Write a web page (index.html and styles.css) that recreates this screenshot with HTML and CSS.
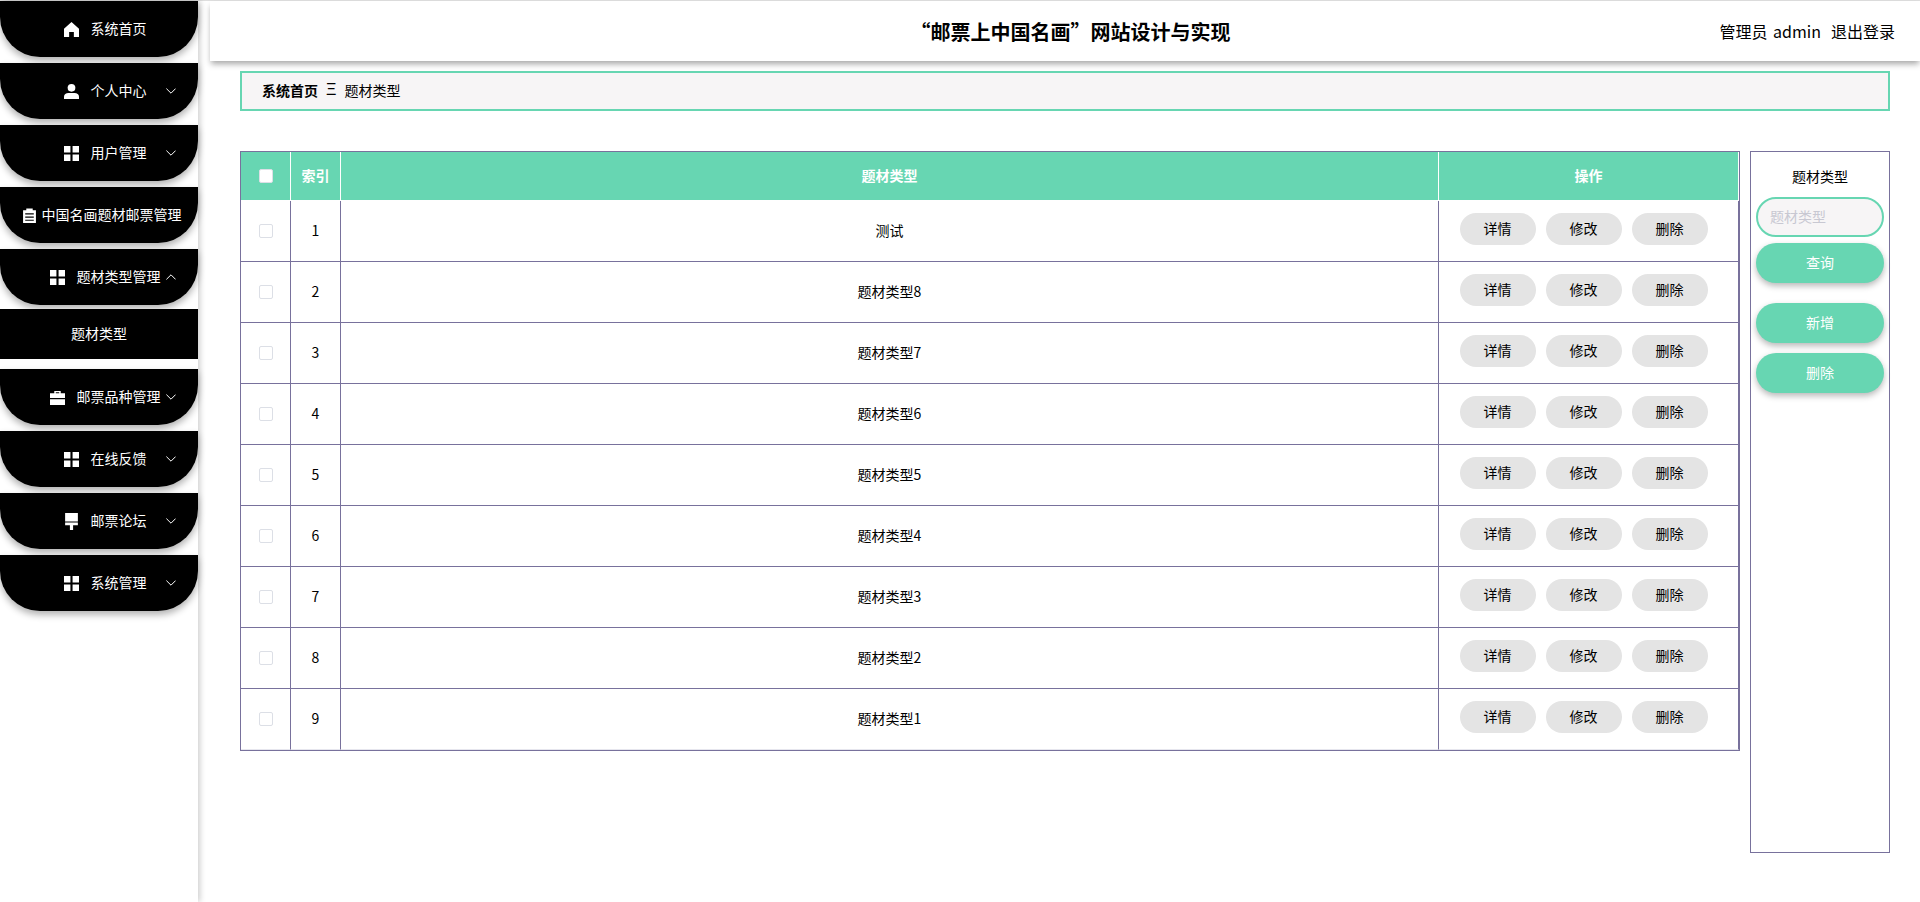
FILE: index.html
```html
<!DOCTYPE html>
<html lang="zh-CN">
<head>
<meta charset="utf-8">
<title>“邮票上中国名画”网站设计与实现</title>
<link rel="stylesheet" href="styles.css">
</head>
<body>
<svg class="sprite" aria-hidden="true">
  <symbol id="i-home" viewBox="0 0 14 14"><path d="M7 0 14 6.2V14H9.2V9.4H4.8V14H0V6.2Z"/></symbol>
  <symbol id="i-user" viewBox="0 0 14 14"><circle cx="7" cy="3.6" r="3.6"/><path d="M0 14V11.6C0 9.6 2 8.4 4 8.4H10C12 8.4 14 9.6 14 11.6V14Z"/></symbol>
  <symbol id="i-grid" viewBox="0 0 14 14"><path d="M0 0H6V6H0ZM8 0H14V6H8ZM0 8H6V14H0ZM8 8H14V14H8Z"/></symbol>
  <symbol id="i-clip" viewBox="0 0 14 14"><path fill-rule="evenodd" d="M1 2H4V0.5H10V2H13V14H1ZM3 5V6H11V5ZM3 8V9H11V8ZM3 11V12H11V11Z"/></symbol>
  <symbol id="i-case" viewBox="0 0 14 14"><path fill-rule="evenodd" d="M4 3V1H10V3H14V7.4H0V3ZM5.4 2.2V3H8.6V2.2ZM0 8.6H14V14H0Z"/></symbol>
  <symbol id="i-brush" viewBox="0 0 14 16"><path d="M1 0H13V8H1ZM1 9H13V11.5H8.5V16H5.5V11.5H1Z"/></symbol>
  <symbol id="i-down" viewBox="0 0 10 6"><path d="M.4.6 5 5.2 9.6.6" fill="none" stroke="#fff" stroke-width="1"/></symbol>
  <symbol id="i-up" viewBox="0 0 10 6"><path d="M.4 5.4 5 .8 9.6 5.4" fill="none" stroke="#fff" stroke-width="1"/></symbol>
</svg>
<div class="app">
  <aside class="sidebar">
    <a class="nav-item"><svg class="nav-icon"><use href="#i-home"/></svg><span>系统首页</span></a>
    <a class="nav-item"><svg class="nav-icon"><use href="#i-user"/></svg><span>个人中心</span><svg class="nav-arrow"><use href="#i-down"/></svg></a>
    <a class="nav-item"><svg class="nav-icon"><use href="#i-grid"/></svg><span>用户管理</span><svg class="nav-arrow"><use href="#i-down"/></svg></a>
    <a class="nav-item nav-item--wide"><svg class="nav-icon"><use href="#i-clip"/></svg><span>中国名画题材邮票管理</span></a>
    <a class="nav-item nav-item--open"><svg class="nav-icon"><use href="#i-grid"/></svg><span>题材类型管理</span><svg class="nav-arrow"><use href="#i-up"/></svg></a>
    <a class="nav-sub">题材类型</a>
    <a class="nav-item"><svg class="nav-icon"><use href="#i-case"/></svg><span>邮票品种管理</span><svg class="nav-arrow"><use href="#i-down"/></svg></a>
    <a class="nav-item"><svg class="nav-icon"><use href="#i-grid"/></svg><span>在线反馈</span><svg class="nav-arrow"><use href="#i-down"/></svg></a>
    <a class="nav-item"><svg class="nav-icon nav-icon--tall"><use href="#i-brush"/></svg><span>邮票论坛</span><svg class="nav-arrow"><use href="#i-down"/></svg></a>
    <a class="nav-item"><svg class="nav-icon"><use href="#i-grid"/></svg><span>系统管理</span><svg class="nav-arrow"><use href="#i-down"/></svg></a>
  </aside>
  <div class="main">
    <header class="topbar">
      <h1 class="title">“邮票上中国名画”网站设计与实现</h1>
      <div class="user"><span>管理员 admin</span><a>退出登录</a></div>
    </header>
    <div class="content">
      <nav class="crumb"><b>系统首页</b><i class="crumb-sep">Ξ</i><span>题材类型</span></nav>
      <div class="work">
        <table class="grid">
          <thead>
            <tr>
              <th class="col-check"><span class="check"></span></th>
              <th class="col-index">索引</th>
              <th>题材类型</th>
              <th class="col-ops">操作</th>
            </tr>
          </thead>
          <tbody>
            <tr><td class="cell-check"><span class="check"></span></td><td>1</td><td>测试</td><td class="ops"><div class="ops-row"><a class="mini">详情</a><a class="mini">修改</a><a class="mini">删除</a></div></td></tr>
            <tr><td class="cell-check"><span class="check"></span></td><td>2</td><td>题材类型8</td><td class="ops"><div class="ops-row"><a class="mini">详情</a><a class="mini">修改</a><a class="mini">删除</a></div></td></tr>
            <tr><td class="cell-check"><span class="check"></span></td><td>3</td><td>题材类型7</td><td class="ops"><div class="ops-row"><a class="mini">详情</a><a class="mini">修改</a><a class="mini">删除</a></div></td></tr>
            <tr><td class="cell-check"><span class="check"></span></td><td>4</td><td>题材类型6</td><td class="ops"><div class="ops-row"><a class="mini">详情</a><a class="mini">修改</a><a class="mini">删除</a></div></td></tr>
            <tr><td class="cell-check"><span class="check"></span></td><td>5</td><td>题材类型5</td><td class="ops"><div class="ops-row"><a class="mini">详情</a><a class="mini">修改</a><a class="mini">删除</a></div></td></tr>
            <tr><td class="cell-check"><span class="check"></span></td><td>6</td><td>题材类型4</td><td class="ops"><div class="ops-row"><a class="mini">详情</a><a class="mini">修改</a><a class="mini">删除</a></div></td></tr>
            <tr><td class="cell-check"><span class="check"></span></td><td>7</td><td>题材类型3</td><td class="ops"><div class="ops-row"><a class="mini">详情</a><a class="mini">修改</a><a class="mini">删除</a></div></td></tr>
            <tr><td class="cell-check"><span class="check"></span></td><td>8</td><td>题材类型2</td><td class="ops"><div class="ops-row"><a class="mini">详情</a><a class="mini">修改</a><a class="mini">删除</a></div></td></tr>
            <tr><td class="cell-check"><span class="check"></span></td><td>9</td><td>题材类型1</td><td class="ops"><div class="ops-row"><a class="mini">详情</a><a class="mini">修改</a><a class="mini">删除</a></div></td></tr>
          </tbody>
        </table>
        <section class="panel">
          <label class="panel-label" for="q">题材类型</label>
          <input id="q" class="panel-input" placeholder="题材类型">
          <button class="pill pill--query">查询</button>
          <button class="pill">新增</button>
          <button class="pill">删除</button>
        </section>
      </div>
    </div>
  </div>
</div>
</body>
</html>
```

FILE: styles.css
```css
* { box-sizing: border-box; }
html, body { margin: 0; height: 100%; background: #fff; overflow: hidden; }
body { font-family: "Noto Sans CJK SC", "Noto Sans", sans-serif; font-size: 14px; color: #000; }
.sprite { display: none; }
.app { display: flex; height: 902px; border-top: 1px solid #dedede; }

/* sidebar */
.sidebar { width: 198px; flex: none; background: #fff; box-shadow: 2px 0 6px rgba(0,0,0,.2); position: relative; z-index: 1; }
.nav-item { position: relative; display: flex; align-items: center; justify-content: center; height: 56px; margin-bottom: 6px; padding-left: 12px; background: #000; color: #fff; border-radius: 0 0 40px 40px; box-shadow: 0 4px 7px rgba(0,0,0,.3); }
.nav-item span { padding-bottom: 2px; }
.nav-item--wide { padding-left: 5px; }
.nav-item--wide .nav-icon { margin-right: 5px; }
.nav-item--open { margin-bottom: 4px; }
.nav-icon { width: 15px; height: 15px; flex: none; margin-right: 12px; fill: #fff; }
.nav-icon--tall { height: 17px; }
.nav-arrow { position: absolute; right: 22px; top: 25px; width: 10px; height: 6px; }
.nav-sub { display: flex; align-items: center; justify-content: center; height: 50px; margin-bottom: 10px; padding-bottom: 2px; background: #000; color: #fff; }

/* main */
.main { flex: 1; min-width: 0; margin-left: 12px; }
.topbar { position: relative; display: flex; align-items: center; justify-content: center; height: 60px; padding: 2px 0 0 11px; background: #fff; box-shadow: 0 4px 6px -1px rgba(0,0,0,.35); }
.title { margin: 0; font-size: 20px; font-weight: 700; line-height: 1; }
.user { position: absolute; right: 25px; top: 18px; display: flex; gap: 10px; font-size: 16px; line-height: 24px; word-spacing: 2px; }
.content { padding: 10px 30px 0; }
.crumb { display: flex; align-items: center; height: 40px; padding: 0 0 2px 20px; background: #f7f5f6; border: 2px solid #67d6b2; font-size: 14px; }
.crumb b { font-weight: 700; }
.crumb-sep { margin: 0 8px; font-style: normal; font-size: 16px; font-family: "Liberation Sans", sans-serif; font-weight: 400; }
.work { display: flex; align-items: flex-start; gap: 10px; margin-top: 40px; }

/* table */
.grid { width: 1500px; flex: none; table-layout: fixed; border-collapse: separate; border-spacing: 0; border: 1px solid #78719c; }
.grid th { height: 49px; padding: 0 0 2px; background: #67d6b2; color: #fff; font-weight: 700; text-align: center; border-right: 1px solid #fff; border-bottom: 1px solid #fff; }
.grid td { height: 61px; padding: 0 0 2px; text-align: center; border-right: 1px solid #78719c; border-bottom: 1px solid #78719c; }
.grid th.col-check, .grid td.cell-check { padding: 0; }
.grid td.ops { padding: 0 0 4px; }
.grid tbody tr:last-child td { border-bottom-color: #e6e6ee; }
.col-check, .col-index { width: 50px; }
.col-ops { width: 300px; }
.check { display: block; width: 14px; height: 14px; margin: 0 auto; background: #fff; border: 1px solid #dcdfe6; border-radius: 2px; }
.ops-row { display: flex; justify-content: center; gap: 10px; padding-right: 10px; }
.mini { width: 76px; height: 32px; line-height: 30px; text-align: center; background: #e4e4e4; border-radius: 16px; }

/* panel */
.panel { display: flex; flex-direction: column; align-items: center; width: 140px; height: 702px; padding-top: 13px; border: 1px solid #78719c; }
.panel-label { line-height: 22px; margin-bottom: 10px; }
.panel-input { width: 128px; height: 40px; margin: 0; padding: 0 12px 2px; background: #f7f5f6; border: 2px solid #67d6b2; border-radius: 20px; font: inherit; outline: 0; }
.panel-input::placeholder { color: #c8c8d2; opacity: 1; }
.pill { width: 128px; height: 40px; margin-top: 10px; padding: 0 0 2px; border: 0; border-radius: 20px; background: #67d6b2; color: #fff; font: inherit; box-shadow: 0 3px 6px rgba(0,0,0,.28); }
.pill--query { margin: 6px 0 10px; }
```
